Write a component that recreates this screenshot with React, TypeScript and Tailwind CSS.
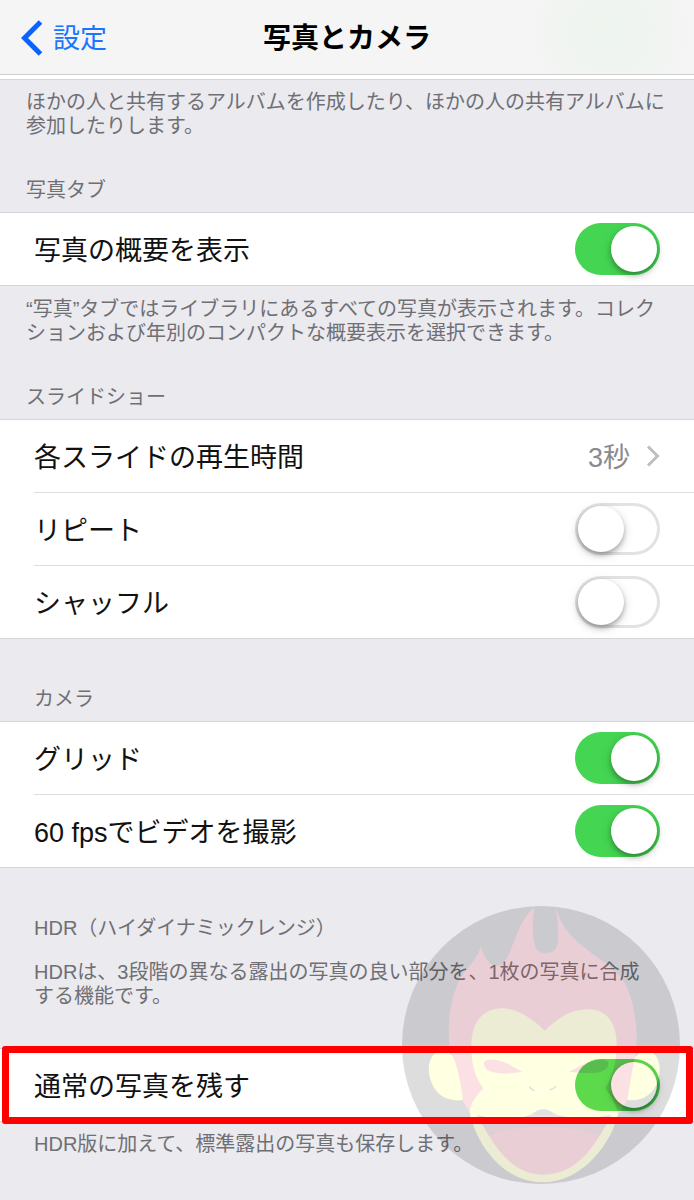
import { useId, useState } from "react";
import type { ReactNode } from "react";

function Separator() {
  return <div className="ml-[34px] h-px bg-[#dedee1]" />;
}

function Group({ children }: { children: ReactNode }) {
  return <div className="border-y border-[#d6d6da] bg-white">{children}</div>;
}

function SwitchRow({ label, initial = false }: { label: string; initial?: boolean }) {
  const id = useId();
  const [on, setOn] = useState(initial);
  return (
    <div className="flex h-[72px] items-center justify-between px-[34px]">
      <label htmlFor={id} className="pt-1 text-[27px] leading-9 text-[#111]">
        {label}
      </label>
      <input
        id={id}
        type="checkbox"
        role="switch"
        checked={on}
        onChange={(e) => setOn(e.target.checked)}
        className="relative h-[52px] w-[85px] shrink-0 appearance-none rounded-full bg-white shadow-[inset_0_0_0_3px_#e2e2e2] before:absolute before:top-[3px] before:left-[3px] before:size-[46px] before:rounded-full before:bg-white before:shadow-[0_3px_5px_rgba(0,0,0,0.28),0_3px_12px_rgba(0,0,0,0.14)] before:transition-all checked:bg-[#44d552] checked:shadow-none checked:before:left-9"
      />
    </div>
  );
}

function SectionTitle({ children, className }: { children: ReactNode; className: string }) {
  return <h2 className={`text-xl leading-6 text-[#6f6f74] ${className}`}>{children}</h2>;
}

function Note({ children, className }: { children: ReactNode; className: string }) {
  return <p className={`text-xl leading-6 text-[#6f6f74] ${className}`}>{children}</p>;
}

function MonkeyMark() {
  return (
    <svg
      viewBox="24 53 834 834"
      className="pointer-events-none absolute top-[38px] right-[14px] size-[278px] opacity-[0.13]"
      aria-hidden="true"
    >
      <circle cx="441" cy="470" r="417" fill="#000" />
      <path
        d="M165 492C106 470 96 540 110 575C123 620 162 642 207 635L232 555ZM738 492C792 472 806 535 792 575C782 617 744 641 700 635L672 555Z"
        fill="#ffff28"
      />
      <path
        d="M421 55C361 112 358 199 324 227C302 244 276 226 260 174C249 221 211 240 189 292C165 350 158 429 170 492C188 520 202 585 207 640L232 680H672L700 635C710 580 718 520 726 492C732 430 724 335 688 278C642 203 516 181 485 55C492 105 498 153 486 180C480 199 433 200 425 178C413 149 416 96 421 55Z"
        fill="#e62430"
      />
      <path
        d="M452 427C412 386 363 360 325 360C262 361 232 406 232 474C232 531 244 569 268 600C246 624 226 648 228 675C243 756 321 882 446 882C568 882 651 763 672 680C669 651 652 625 634 600C654 568 668 523 668 466C667 401 637 363 581 363C532 364 492 388 452 427Z"
        fill="#ffff28"
      />
      <path
        d="M270 523C276 507 314 513 342 526L386 551C349 555 311 559 286 548C274 542 269 533 270 523ZM643 523C637 507 599 513 571 526L525 550C563 553 602 559 628 547C640 541 645 532 643 523Z"
        fill="#e62430"
      />
      <path
        d="M249 681C316 697 379 696 423 673C437 660 459 660 473 673C523 694 584 695 652 679C611 758 558 859 446 859C341 858 294 758 249 681Z"
        fill="#e62430"
      />
      <path
        d="M249 681C316 697 379 696 423 673C437 660 459 660 473 673C523 694 584 695 652 679L618 742C508 708 390 704 285 742Z"
        fill="#3a2030"
        opacity="0.5"
      />
      <path d="M414 677Q448 649 482 677Q448 685 414 677Z" fill="#222" />
      <path d="M406 594Q410 604 422 607M467 604Q482 601 486 592" fill="none" stroke="#111" strokeWidth="4" />
    </svg>
  );
}

export default function App() {
  return (
    <div
      lang="ja"
      className="min-h-screen bg-[#eaeaef] pb-10 font-['Liberation_Sans','Noto_Sans_CJK_JP',sans-serif]"
    >
      <header className="grid h-[75px] grid-cols-[1fr_auto_1fr] items-center border-b border-[#cfcfd1] bg-[#f5f5f5] bg-[radial-gradient(circle_at_88%_45%,#eef4ef_0,#f1f4f1_50px,transparent_90px)]">
        <a href="#settings" className="flex items-center gap-2.5 pt-0.5 pl-[21px] text-[27px] leading-9 text-[#1a75ff]">
          <svg viewBox="0 0 22 36" className="h-9 w-[22px]" fill="none" aria-hidden="true">
            <path d="M19.5 2L3.5 18L19.5 34" stroke="#0a62ff" strokeWidth="5" />
          </svg>
          <span className="pt-0.5">設定</span>
        </a>
        <h1 className="pt-1 text-[28px] leading-9 font-bold text-black">写真とカメラ</h1>
      </header>

      <main>
        <div className="h-[5px] border-b border-[#d6d6da] bg-white" />
        <Note className="pt-2.5 pr-5 pl-[26px]">
          ほかの人と共有するアルバムを作成したり、ほかの人の共有アルバムに参加したりします。
        </Note>

        <section>
          <SectionTitle className="px-[26px] pt-10 pb-2.5">写真タブ</SectionTitle>
          <Group>
            <SwitchRow label="写真の概要を表示" initial />
          </Group>
          <Note className="pt-[11px] pr-5 pl-[26px]">
            “写真”タブではライブラリにあるすべての写真が表示されます。コレクションおよび年別のコンパクトな概要表示を選択できます。
          </Note>
        </section>

        <section>
          <SectionTitle className="px-[26px] pt-10 pb-2.5">スライドショー</SectionTitle>
          <Group>
            <a
              href="#duration"
              className="flex h-[72px] items-center px-[34px] text-[27px] leading-9 text-[#111]"
            >
              <span className="flex-1 pt-1">各スライドの再生時間</span>
              <span className="pt-1 text-[#8a8a8f]">3秒</span>
              <svg viewBox="0 0 14 22" className="ml-4 h-[22px] w-3.5" fill="none" aria-hidden="true">
                <path d="M2 1.5L11.5 11L2 20.5" stroke="#bdbdc3" strokeWidth="3" />
              </svg>
            </a>
            <Separator />
            <SwitchRow label="リピート" />
            <Separator />
            <SwitchRow label="シャッフル" />
          </Group>
        </section>

        <section>
          <SectionTitle className="px-[34px] pt-12 pb-2.5">カメラ</SectionTitle>
          <Group>
            <SwitchRow label="グリッド" initial />
            <Separator />
            <SwitchRow label="60 fpsでビデオを撮影" initial />
          </Group>
        </section>

        <section className="relative">
          <SectionTitle className="px-[34px] pt-12">HDR（ハイダイナミックレンジ）</SectionTitle>
          <Note className="pt-5 pr-10 pb-10 pl-[34px]">
            HDRは、3段階の異なる露出の写真の良い部分を、1枚の写真に合成する機能です。
          </Note>
          <div className="relative">
            <Group>
              <SwitchRow label="通常の写真を残す" initial />
            </Group>
            <div className="pointer-events-none absolute -inset-y-0.5 right-px left-0.5 z-10 rounded-[3px] border-[7px] border-[#ff0000]" />
          </div>
          <Note className="px-[34px] pt-2.5">HDR版に加えて、標準露出の写真も保存します。</Note>
          <MonkeyMark />
        </section>
      </main>
    </div>
  );
}
